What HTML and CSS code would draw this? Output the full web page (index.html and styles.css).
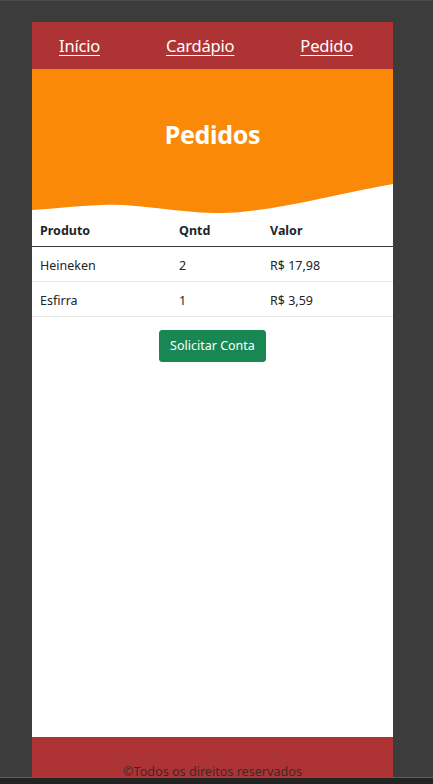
FILE: index.html
```
<!DOCTYPE html>
<html lang="pt-BR">
<head>
<meta charset="utf-8">
<title>Pedidos</title>
<link rel="stylesheet" href="styles.css">
</head>
<body>
<div class="screen">
  <div class="top-line"></div>
  <div class="viewport">
    <div class="card">
      <nav class="nav">
        <a href="#">Início</a>
        <a href="#">Cardápio</a>
        <a href="#">Pedido</a>
      </nav>
      <div class="content">
        <header class="hero">
          <h1>Pedidos</h1>
        </header>
        <svg class="wave" viewBox="0 0 361 29" width="361" height="29" preserveAspectRatio="none">
          <path d="M0 0 H361 V0 C300 11 232 30 182 29 C140 28 104 19 70 21 C42 22 20 25 0 26 Z" fill="#fb8908"/>
        </svg>
        <table class="orders">
          <thead>
            <tr><th class="c1">Produto</th><th class="c2">Qntd</th><th class="c3">Valor</th></tr>
          </thead>
          <tbody>
            <tr><td>Heineken</td><td>2</td><td>R$ 17,98</td></tr>
            <tr><td>Esfirra</td><td>1</td><td>R$ 3,59</td></tr>
          </tbody>
        </table>
        <div class="actions">
          <button class="btn">Solicitar Conta</button>
        </div>
      </div>
      <footer class="footer">©Todos os direitos reservados</footer>
    </div>
  </div>
  <div class="status"></div>
</div>
</body>
</html>
```
FILE: styles.css
```
* { box-sizing: border-box; }
html, body { margin: 0; padding: 0; }
body {
  background: #3c3c3c;
  font-family: "Noto Sans", "Open Sans", sans-serif;
}
.screen {
  height: 784px;
  display: flex;
  flex-direction: column;
}
.top-line { height: 1px; background: #4c4c4c; flex: none; }
.viewport {
  flex: 1;
  overflow: hidden;
  padding: 21px 0 0 32px;
}
.status {
  flex: none;
  height: 7px;
  background: #202322;
  border-top: 1px solid #5e5e5e;
}
.card {
  width: 361px;
  background: #fff;
}
.nav {
  height: 47px;
  background: #ae3334;
  display: flex;
  align-items: center;
  justify-content: space-between;
  padding: 0 40px 0 27px;
}
.nav a {
  color: #fff;
  font-size: 16.5px;
  text-decoration: underline;
  text-underline-offset: 3px;
  text-decoration-thickness: 1px;
  letter-spacing: -0.2px;
}
.content { min-height: 668px; }
.hero {
  background: #fb8908;
  height: 115px;
  display: flex;
  align-items: center;
  justify-content: center;
  padding-top: 14px;
}
.hero h1 {
  margin: 0;
  color: #fff;
  font-size: 25px;
  font-weight: 700;
  letter-spacing: -0.3px;
}
.wave { display: block; }
.orders {
  width: 100%;
  border-collapse: collapse;
  font-size: 12.5px;
  color: #212529;
  margin-top: -1px;
}
.orders th, .orders td {
  text-align: left;
  padding: 9px 8px 6px;
  line-height: 19px;
}
.orders th { font-weight: 700; border-bottom: 1px solid #3a3a3a; }
.orders td { border-bottom: 1px solid #e6e6e6; }
.c1 { width: 139px; }
.c2 { width: 91px; }
.actions {
  display: flex;
  justify-content: center;
  padding-top: 13px;
}
.btn {
  background: #198754;
  color: #fff;
  border: 1px solid #198754;
  border-radius: 3px;
  font-family: inherit;
  font-size: 12.5px;
  line-height: 20px;
  padding: 5px 10px;
  width: 107px;
}
.footer {
  background: #ae3334;
  height: 60px;
  padding-top: 25px;
  text-align: center;
  color: #3a2a2a;
  font-size: 12.6px;
  line-height: 20px;
}
```
